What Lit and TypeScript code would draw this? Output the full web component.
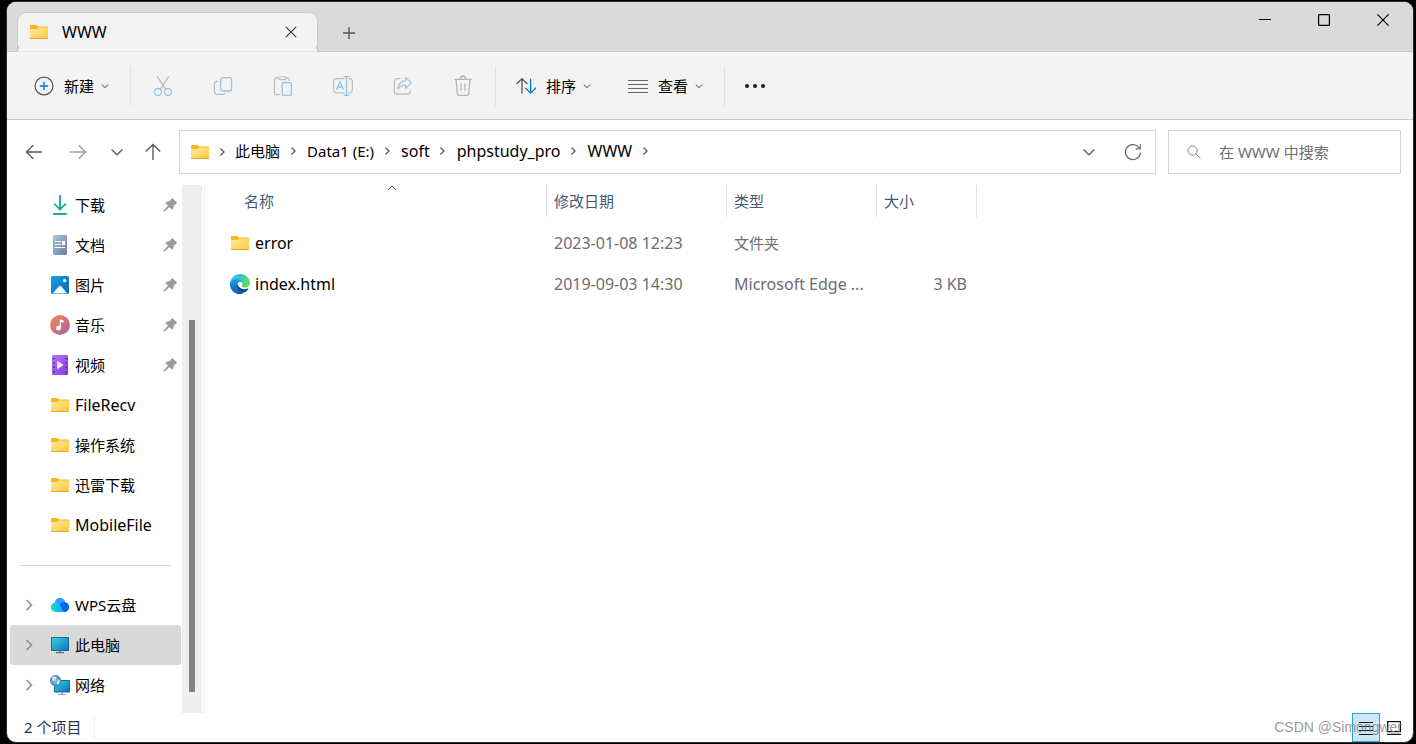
import { LitElement, html, css, svg, TemplateResult } from "lit";
import { customElement, property } from "lit/decorators.js";

const ICONS: Record<string, { w: number; h: number; body: TemplateResult }> = {
  folder: {
    w: 20, h: 20,
    body: svg`
      <defs><linearGradient id="f" x1="0" y1="0" x2="1" y2="1"><stop offset="0" stop-color="#ffe9a0"/><stop offset="1" stop-color="#ffc93c"/></linearGradient></defs>
      <path d="M1 3.8Q1 3 1.8 3H7Q7.6 3 8 3.5L9 4.6H18.4Q19 4.6 19 5.4V8H1Z" fill="#f8b71c"/>
      <path d="M1 7H7.2L9 5.6H19V16.2Q19 17 18.2 17H1.8Q1 17 1 16.2Z" fill="url(#f)"/>
      <path d="M1 16.1H19Q19 17 18.2 17H1.8Q1 17 1 16.1Z" fill="#e5a525"/>`,
  },
  close: { w: 12, h: 12, body: svg`<path d="M.8.8 11.2 11.2M11.2.8.8 11.2" stroke="#333" stroke-width="1.1"/>` },
  plus: { w: 12, h: 12, body: svg`<path d="M6 0V12M0 6H12" stroke="#555" stroke-width="1.4"/>` },
  minimize: { w: 12, h: 12, body: svg`<path d="M0 5.5H12" stroke="#000"/>` },
  maximize: { w: 12, h: 12, body: svg`<rect x=".6" y=".6" width="10.8" height="10.8" rx="1" stroke="#000" stroke-width="1.2"/>` },
  winclose: { w: 12, h: 12, body: svg`<path d="M.4.4 11.6 11.6M11.6.4.4 11.6" stroke="#000" stroke-width="1.2"/>` },
  create: { w: 20, h: 20, body: svg`<circle cx="10" cy="10" r="8.9" stroke="#555" stroke-width="1.2"/><path d="M10 5.8V14.2M5.8 10H14.2" stroke="#0078d4" stroke-width="1.4"/>` },
  down: { w: 10, h: 10, body: svg`<path d="M1.8 3.6 5 6.6 8.2 3.6" stroke="#777" stroke-width="1.1"/>` },
  cut: {
    w: 20, h: 22,
    body: svg`<path d="M4.3 1.4 12.9 14.6M15.7 1.4 7.1 14.6" stroke="#b9b9b9" stroke-width="1.2"/><circle cx="5" cy="17" r="3.5" stroke="#94c4ea" stroke-width="1.3"/><circle cx="15" cy="17" r="3.5" stroke="#94c4ea" stroke-width="1.3"/>`,
  },
  copy: {
    w: 20, h: 20,
    body: svg`<path d="M5 5.3H4A2.6 2.6 0 0 0 1.4 7.9V15.6A2.8 2.8 0 0 0 4.2 18.4H9.5Q11.3 18.4 12 16.8" stroke="#bcbcbc" stroke-width="1.2"/><rect x="7.6" y="1.6" width="11" height="13.4" rx="2.6" stroke="#94c4ea" stroke-width="1.3"/>`,
  },
  paste: {
    w: 20, h: 20,
    body: svg`<path d="M6 1.9H3.2A1.7 1.7 0 0 0 1.5 3.6V17A1.7 1.7 0 0 0 3.2 18.7H7M13 1.9H14.5A1.7 1.7 0 0 1 16.2 3.6V5" stroke="#bcbcbc" stroke-width="1.2"/><rect x="5.6" y=".8" width="7.6" height="2.8" rx="1.4" stroke="#bcbcbc" stroke-width="1.1"/><rect x="9.2" y="6.7" width="9.2" height="12.6" rx="1.6" stroke="#94c4ea" stroke-width="1.3"/>`,
  },
  rename: {
    w: 22, h: 20,
    body: svg`<path d="M12.6 2.7H4.5A3 3 0 0 0 1.5 5.7V13.8A3 3 0 0 0 4.5 16.8H12.6M16.6 2.7H17.4A3 3 0 0 1 20.4 5.7V13.8A3 3 0 0 1 17.4 16.8H16.6" stroke="#bcbcbc" stroke-width="1.2"/><path d="M4.6 13.8 8 5.6 11.4 13.8M5.8 11H10.2M14.5.7V19.3M11.6.7H17.4M11.6 19.3H17.4" stroke="#94c4ea" stroke-width="1.3"/>`,
  },
  share: {
    w: 20, h: 20,
    body: svg`<path d="M7.5 2.6H4A2.6 2.6 0 0 0 1.4 5.2V15.6A2.6 2.6 0 0 0 4 18.2H14.4A2.6 2.6 0 0 0 17 15.6V14.6" stroke="#bcbcbc" stroke-width="1.2"/><path d="M12.6 1.6 18.6 6.9 12.6 12.2V9.2Q8 8.8 5 12.8Q5.6 5.3 12.6 4.7Z" stroke="#94c4ea" stroke-width="1.2" stroke-linejoin="round"/>`,
  },
  trash: {
    w: 20, h: 22,
    body: svg`<path d="M1.4 4.4H18.6M7.4 4.2V3.6A2.6 2.6 0 0 1 12.6 3.6V4.2M3 4.6 4.4 18.6A2 2 0 0 0 6.4 20.4H13.6A2 2 0 0 0 15.6 18.6L17 4.6M8.1 8.6V15.6M11.9 8.6V15.6" stroke="#b4b4b4" stroke-width="1.3"/>`,
  },
  sort: {
    w: 20, h: 20,
    body: svg`<path d="M6 17.5V2.8M.6 8 6 2.6 11.4 8" stroke="#555" stroke-width="1.3"/><path d="M14.6 2.5V17M9.2 11.8 14.6 17.2 20 11.8" stroke="#0078d4" stroke-width="1.3"/>`,
  },
  view: { w: 20, h: 20, body: svg`<path d="M0 4.5H20M0 8.5H20M0 12.5H20M0 16.5H20" stroke="#666" stroke-width="1.1"/>` },
  more: { w: 22, h: 6, body: svg`<circle cx="3" cy="3" r="2" fill="#1a1a1a"/><circle cx="11" cy="3" r="2" fill="#1a1a1a"/><circle cx="19" cy="3" r="2" fill="#1a1a1a"/>` },
  back: { w: 18, h: 18, body: svg`<path d="M17 9H1.6M8.2 2.2 1.4 9 8.2 15.8" stroke="#5c5c5c" stroke-width="1.4"/>` },
  forward: { w: 18, h: 18, body: svg`<path d="M1 9H16.4M9.8 2.2 16.6 9 9.8 15.8" stroke="#a2a2a2" stroke-width="1.4"/>` },
  recent: { w: 14, h: 14, body: svg`<path d="M1.6 4.4 7 9.8 12.4 4.4" stroke="#606060" stroke-width="1.4"/>` },
  up: { w: 18, h: 18, body: svg`<path d="M9 17V1.6M1.8 8.6 9 1.4 16.2 8.6" stroke="#5c5c5c" stroke-width="1.4"/>` },
  crumb: { w: 10, h: 10, body: svg`<path d="M2.4 1.4 6 5 2.4 8.6" stroke="#666" stroke-width="1.4"/>` },
  refresh: { w: 18, h: 18, body: svg`<path d="M16.4 9.6A7.5 7.5 0 1 1 14.6 4.2L16 5.6M16.2 1.2V5.8H11.6" stroke="#6c6c6c" stroke-width="1.2"/>` },
  search: { w: 14, h: 14, body: svg`<circle cx="5.6" cy="5.6" r="4.6" stroke="#888"/><path d="M9 9 13.4 13.4" stroke="#888"/>` },
  expand: { w: 12, h: 12, body: svg`<path d="M3.6 1 8.6 6 3.6 11" stroke="#8a8a8a" stroke-width="1.5"/>` },
  pin: {
    w: 14, h: 14,
    body: svg`<path d="M8.6.8Q9.3.2 10 .9L13.2 4.1Q13.9 4.8 13.1 5.4L10.6 7.3Q10.6 9.8 9.2 11.4L6.4 8.9 1.2 13.6.6 13 5.2 7.7 2.6 4.8Q4.4 3.5 6.8 3.5Z" fill="#949ea6" stroke="#949ea6" stroke-width=".6"/>`,
  },
  sortup: { w: 10, h: 6, body: svg`<path d="M.8 5.2 5 1 9.2 5.2" stroke="#666"/>` },
  downloads: {
    w: 20, h: 20,
    body: svg`<defs><linearGradient id="d" x1="0" y1="0" x2="1" y2="1"><stop offset="0" stop-color="#3cc18e"/><stop offset="1" stop-color="#0c9f9b"/></linearGradient></defs><path d="M9 0H11V12.2L15.2 8 16.5 9.3 10 15.8 3.5 9.3 4.8 8 9 12.2Z" fill="url(#d)"/><rect x="3" y="18" width="14" height="2" rx=".6" fill="#1fae93"/>`,
  },
  documents: {
    w: 20, h: 20,
    body: svg`<defs><linearGradient id="o" x1="0" y1="0" x2="1" y2="1"><stop offset="0" stop-color="#b4c6da"/><stop offset="1" stop-color="#627d9f"/></linearGradient></defs><rect x="3" y="0" width="14" height="20" rx="1.4" fill="url(#o)"/><path d="M5 6.5H11M5 9.5H11M5 12.5H15" stroke="#fff"/><rect x="12" y="6" width="3" height="4" fill="#fff"/>`,
  },
  pictures: {
    w: 20, h: 20,
    body: svg`<defs><linearGradient id="p" x1="0" y1="0" x2="1" y2="1"><stop offset="0" stop-color="#1d9fe6"/><stop offset="1" stop-color="#0467b9"/></linearGradient></defs><rect x="1" y="1" width="18" height="18" rx="1.6" fill="url(#p)"/><path d="M2.6 18.4 9 11.2Q10 10.2 11 11.2L17.4 18.4Z" fill="#f2f8fd"/><circle cx="14.6" cy="5.6" r="1.7" fill="#fff"/>`,
  },
  music: {
    w: 20, h: 20,
    body: svg`<defs><linearGradient id="m" x1="0" y1="0" x2="1" y2="1"><stop offset="0" stop-color="#f58a4e"/><stop offset="1" stop-color="#a95fa9"/></linearGradient></defs><circle cx="10" cy="10" r="10" fill="url(#m)"/><path d="M9.8 4.2 13.6 5.4V7.6L11 6.9V13A2.4 2.4 0 1 1 9.8 10.9Z" fill="#fff"/>`,
  },
  videos: {
    w: 20, h: 20,
    body: svg`<defs><linearGradient id="v" x1="0" y1="0" x2="1" y2="1"><stop offset="0" stop-color="#b478f5"/><stop offset="1" stop-color="#8438e0"/></linearGradient></defs><rect x="2" y="0" width="16" height="20" rx="1.2" fill="url(#v)"/><path d="M3.8 3V19M16.2 3V19" stroke="#4a1f87" stroke-width="1.4" stroke-dasharray="1.5 2.8"/><path d="M7.2 5.8V14.2L13.6 10Z" fill="#f1e8fb"/>`,
  },
  cloud: {
    w: 20, h: 20,
    body: svg`<defs><linearGradient id="c" x1="0" y1="0" x2="1" y2="0"><stop offset="0" stop-color="#22e0d0"/><stop offset="1" stop-color="#119cff"/></linearGradient></defs><circle cx="10" cy="8" r="5.2" fill="#2aa0fb"/><path d="M9.6 10A5.3 5.3 0 0 1 14.4 7A5 5 0 0 1 14 17H5Z" fill="#0c62f2"/><path d="M5.4 7.6Q8.6 7.6 10 10.2L14 17H5.4A4.7 4.7 0 0 1 5.4 7.6Z" fill="url(#c)"/>`,
  },
  pc: {
    w: 20, h: 20,
    body: svg`<defs><linearGradient id="s" x1="0" y1="0" x2="1" y2="1"><stop offset="0" stop-color="#33d3e2"/><stop offset="1" stop-color="#1272bb"/></linearGradient></defs><rect x="1" y="2" width="18" height="14" rx=".8" fill="#11618f"/><rect x="1.8" y="2.8" width="16.4" height="12.4" fill="url(#s)"/><path d="M9 16H11V17H9Z" fill="#8b959d"/><path d="M6 17H14V18.2H6Z" fill="#59646d"/>`,
  },
  network: {
    w: 20, h: 20,
    body: svg`<defs><linearGradient id="n" x1="0" y1="0" x2="1" y2="1"><stop offset="0" stop-color="#33cfe0"/><stop offset="1" stop-color="#1272bb"/></linearGradient><radialGradient id="g"><stop offset="0" stop-color="#8cc7ea"/><stop offset="1" stop-color="#4a85a9"/></radialGradient></defs><rect x="4" y="5" width="16" height="12.4" rx=".8" fill="#11618f"/><rect x="4.8" y="5.8" width="14.4" height="10.8" fill="url(#n)"/><path d="M11 17.4H13V19H16V20H8V19H11Z" fill="#9aa5ad"/><circle cx="5.6" cy="5.6" r="5.6" fill="url(#g)"/><path d="M2 2.6Q5 .6 6.4 2.4L5.2 5 2.6 6.2ZM7.6 5.8 10.2 5 9 9 6.6 9.4Z" fill="#d7eef9"/>`,
  },
  edge: {
    w: 20, h: 20,
    body: svg`<defs><linearGradient id="ea" x1="0" y1="0" x2="1" y2=".4"><stop offset="0" stop-color="#2fb4f0"/><stop offset=".5" stop-color="#35c3d0"/><stop offset="1" stop-color="#63de52"/></linearGradient><linearGradient id="eb" x1="0" y1="0" x2="0" y2="1"><stop offset="0" stop-color="#1b9de2"/><stop offset="1" stop-color="#0a5fb8"/></linearGradient></defs>
    <path d="M0 9.4C.6 4 4.8 0 10 0C15.8 0 20 4.3 20 8.7C20 11.7 17.6 13.6 14.9 13.6C12.6 13.6 11.5 12.8 11.9 12C12.9 10.2 12.8 6 8 5.2C4.2 4.8 1.2 6.6 0 9.4Z" fill="url(#ea)"/>
    <path d="M0 10.2C.1 7.2 3 5 6.8 5C10.4 5 12.6 7.4 12.6 9.7C12.5 9 11.4 7.6 9.6 7.8C7.4 8.2 6.4 11.2 7.6 14C8.7 16.6 11.4 18.6 14.4 18.5C13 19.5 11.6 20 10 20C4.4 20-.2 15.6 0 10.2Z" fill="url(#eb)"/>
    <path d="M7.4 9.8C6 13 7.8 17.4 11.8 18.4C14.6 19 17.2 17.2 18.4 15C18.7 14.4 18.3 14.1 17.8 14.4C15.4 15.6 12 15.6 9.8 13.6C8.6 12.6 7.6 11.2 7.4 9.8Z" fill="#104a8e"/>`,
  },
  details: { w: 14, h: 14, body: svg`<path d="M0 1.5H14M0 5.5H14M0 9.5H14M0 13.5H14" stroke="#111"/>` },
  tiles: { w: 14, h: 14, body: svg`<rect x=".6" y=".6" width="12.8" height="10" stroke="#111" stroke-width="1.2"/><path d="M0 13.4H14" stroke="#111" stroke-width="1.2"/>` },
};

@customElement("ui-icon")
class UiIcon extends LitElement {
  @property() name = "";
  static styles = css`
    :host { display: inline-flex; flex: none; }
    svg { display: block; fill: none; }
  `;
  render() {
    const i = ICONS[this.name];
    return html`<svg width=${i.w} height=${i.h} viewBox="0 0 ${i.w} ${i.h}" aria-hidden="true">${i.body}</svg>`;
  }
}

const PINNED = [
  ["downloads", "下载"], ["documents", "文档"], ["pictures", "图片"], ["music", "音乐"], ["videos", "视频"],
];
const FOLDERS = ["FileRecv", "操作系统", "迅雷下载", "MobileFile"];
const ROOTS = [["cloud", "WPS云盘"], ["pc", "此电脑"], ["network", "网络"]];
const CRUMBS = ["此电脑", "Data1 (E:)", "soft", "phpstudy_pro", "WWW"];
const FILES = [
  { icon: "folder", name: "error", date: "2023-01-08 12:23", type: "文件夹", size: "" },
  { icon: "edge", name: "index.html", date: "2019-09-03 14:30", type: "Microsoft Edge ...", size: "3 KB" },
];
const EDITS = [
  ["cut", "剪切"], ["copy", "复制"], ["paste", "粘贴"], ["rename", "重命名"], ["share", "共享"], ["trash", "删除"],
];

@customElement("app-root")
class AppRoot extends LitElement {
  static styles = css`
    :host {
      display: flex; box-sizing: border-box; min-height: 100vh; padding: 1px 2px 1px 6px; background: #000;
      font: 15px/20px "Noto Sans", "Noto Sans CJK SC", sans-serif; color: #000;
    }
    * { box-sizing: border-box; }
    button, input { font: inherit; color: inherit; border: 0; padding: 0; margin: 0; background: none; }
    button { display: inline-flex; align-items: center; justify-content: center; white-space: nowrap; }
    a { color: inherit; text-decoration: none; }
    ul { list-style: none; margin: 0; padding: 0; }
    .window { flex: 1; min-width: 0; display: flex; flex-direction: column; background: #fff; border: 1px solid #2b2b2b; border-radius: 10px; overflow: hidden; }

    .titlebar { display: flex; align-items: flex-end; height: 50px; padding: 0 1px 0 10px; background: #dadada; border-bottom: 1px solid #cacaca; }
    .tab { position: relative; display: flex; align-items: center; width: 301px; height: 40px; margin-bottom: -1px; padding: 0 20px 0 11px; background: #f3f3f3; border: 1px solid #cacaca; border-bottom-color: #e9e9e9; border-radius: 9px 9px 0 0; }
    .tab::before, .tab::after { content: ""; position: absolute; bottom: -1px; width: 5px; height: 5px; border-bottom: 1px solid #cacaca; }
    .tab::before { left: -5px; border-right: 1px solid #cacaca; border-bottom-right-radius: 5px; }
    .tab::after { right: -5px; border-left: 1px solid #cacaca; border-bottom-left-radius: 5px; }
    .tab-name { flex: 1; padding-left: 13px; }
    .add { width: 61px; height: 36px; }
    .controls { display: flex; margin-left: auto; align-self: flex-start; }
    .controls button { width: 59px; height: 35px; }

    .toolbar { display: flex; align-items: center; height: 68px; padding-left: 9px; background: #f3f3f3; border-bottom: 1px solid #c8c8c8; }
    .command { gap: 10px; height: 40px; padding: 0 18px; }
    .command ui-icon + span + ui-icon { margin-left: -4px; }
    .tool { width: 60px; height: 40px; }
    .more { width: 56px; height: 40px; }
    .rule { width: 1px; height: 40px; margin: 0 2px; background: #e1e1e1; }

    .location { display: flex; align-items: center; padding: 10px 12px 11px 5px; }
    .step { width: 44px; height: 40px; }
    .step.narrow { width: 34px; }
    .step.wide { width: 38px; }
    .address, .search { display: flex; align-items: center; height: 44px; border: 1px solid #d4d4d4; }
    .address { flex: 1; min-width: 0; margin: 0 12px 0 7px; padding-left: 10px; }
    .crumbs { display: flex; flex: 1; padding-bottom: 2px; }
    .crumbs li { display: flex; align-items: center; }
    .arrow { display: flex; justify-content: center; width: 27px; }
    .arrow.first { width: 25px; }
    .search { width: 233px; padding: 0 18px; gap: 18px; }
    .search input { flex: 1; min-width: 0; outline: 0; }
    .search input::placeholder { color: #6d6d6d; opacity: 1; }

    .body { flex: 1; display: flex; min-height: 0; }
    .nav { display: flex; width: 198px; border-right: 1px solid #f3f3f3; }
    .tree { width: 171px; margin: 0 1px 0 3px; }
    .node { display: flex; align-items: center; height: 40px; padding-right: 4px; border-radius: 3px; }
    .node.selected { background: #d9d9d9; }
    .twist { width: 40px; padding-left: 13px; display: flex; }
    .label { flex: 1; padding-left: 5px; white-space: nowrap; }
    .split { height: 40px; padding: 20px 10px 0; }
    .line { height: 1px; background: #d4d4d4; }
    .track { display: flex; width: 20px; padding: 135px 7px 21px; background: #efefef; }
    .thumb { flex: 1; background: #858585; }

    .files { flex: 1; min-width: 0; }
    table { border-collapse: separate; border-spacing: 0; table-layout: fixed; width: 772px; }
    .c-name { width: 342px; } .c-date { width: 180px; } .c-type { width: 150px; } .c-size { width: 100px; }
    th { height: 32px; padding: 0; font-weight: 400; text-align: left; border-right: 1px solid #e2e2e2; color: #44597a; }
    th button { position: relative; width: 100%; height: 32px; padding-left: 7px; justify-content: flex-start; }
    .c-name button { width: 309px; margin-left: 32px; }
    .sorted { position: absolute; top: 0; left: 0; right: 0; display: flex; justify-content: center; }
    td { height: 41px; padding: 0 0 0 7px; color: #6d6d6d; white-space: nowrap; }
    tbody::before { content: ""; display: table-row; height: 5px; }
    td.name { padding-left: 25px; color: #000; }
    .file { display: flex; align-items: center; gap: 5px; }
    td.size { text-align: right; padding-right: 10px; }
    .latin { font-size: 16px; }

    .status { display: flex; align-items: center; height: 29px; padding: 0 5px 0 17px; color: #1f3557; }
    .count { padding: 0 13px 2px 0; border-right: 1px solid #f0f0f0; }
    .modes { position: relative; display: flex; align-items: center; margin-left: auto; }
    .mode { width: 28px; height: 29px; }
    .mode.on { background: #cce8f8; border: 1px solid #2f9fd8; }
    .mark { position: absolute; right: 6px; top: 4px; white-space: nowrap; font: 14px/20px "Liberation Sans", sans-serif; color: #7f7f7fcc; }
  `;

  private text(value: string) {
    return html`<span class=${/^[\x20-\x7e]+$/.test(value) ? "latin" : ""}>${value}</span>`;
  }

  private node(icon: string, name: string, kind: "pinned" | "plain" | "root", selected = false) {
    return html`<li><a href="#" class="node ${selected ? "selected" : ""}">
      <span class="twist">${kind === "root" ? html`<ui-icon name="expand"></ui-icon>` : ""}</span>
      <ui-icon name=${icon}></ui-icon><span class="label">${this.text(name)}</span>
      ${kind === "pinned" ? html`<ui-icon name="pin"></ui-icon>` : ""}
    </a></li>`;
  }

  render() {
    return html`<div class="window">
      <header class="titlebar">
        <div class="tab"><ui-icon name="folder"></ui-icon><span class="tab-name latin">WWW</span>
          <button aria-label="关闭标签页"><ui-icon name="close"></ui-icon></button></div>
        <button class="add" aria-label="新标签页"><ui-icon name="plus"></ui-icon></button>
        <div class="controls">
          <button aria-label="最小化"><ui-icon name="minimize"></ui-icon></button>
          <button aria-label="最大化"><ui-icon name="maximize"></ui-icon></button>
          <button aria-label="关闭"><ui-icon name="winclose"></ui-icon></button>
        </div>
      </header>
      <div class="toolbar" role="toolbar">
        <button class="command"><ui-icon name="create"></ui-icon><span>新建</span><ui-icon name="down"></ui-icon></button>
        <span class="rule"></span>
        ${EDITS.map(([icon, label]) => html`<button class="tool" disabled aria-label=${label}><ui-icon name=${icon}></ui-icon></button>`)}
        <span class="rule"></span>
        <button class="command"><ui-icon name="sort"></ui-icon><span>排序</span><ui-icon name="down"></ui-icon></button>
        <button class="command"><ui-icon name="view"></ui-icon><span>查看</span><ui-icon name="down"></ui-icon></button>
        <span class="rule"></span>
        <button class="more" aria-label="更多"><ui-icon name="more"></ui-icon></button>
      </div>
      <div class="location">
        <button class="step" aria-label="后退"><ui-icon name="back"></ui-icon></button>
        <button class="step" aria-label="前进"><ui-icon name="forward"></ui-icon></button>
        <button class="step narrow" aria-label="最近"><ui-icon name="recent"></ui-icon></button>
        <button class="step wide" aria-label="向上"><ui-icon name="up"></ui-icon></button>
        <div class="address">
          <ui-icon name="folder"></ui-icon><span class="arrow first"><ui-icon name="crumb"></ui-icon></span>
          <ul class="crumbs">${CRUMBS.map((c) => html`<li><a href="#" class=${/^\w+$/.test(c) ? "latin" : ""}>${c}</a><span class="arrow"><ui-icon name="crumb"></ui-icon></span></li>`)}</ul>
          <button class="step" aria-label="历史"><ui-icon name="recent"></ui-icon></button>
          <button class="step" aria-label="刷新"><ui-icon name="refresh"></ui-icon></button>
        </div>
        <label class="search"><ui-icon name="search"></ui-icon><input type="text" aria-label="搜索" placeholder="在 WWW 中搜索"></label>
      </div>
      <div class="body">
        <nav class="nav">
          <ul class="tree">
            ${PINNED.map(([icon, name]) => this.node(icon, name, "pinned"))}
            ${FOLDERS.map((name) => this.node("folder", name, "plain"))}
            <li class="split"><div class="line"></div></li>
            ${ROOTS.map(([icon, name]) => this.node(icon, name, "root", icon === "pc"))}
          </ul>
          <div class="track"><div class="thumb"></div></div>
        </nav>
        <main class="files">
          <table>
            <thead><tr>
              <th class="c-name"><button>名称<span class="sorted"><ui-icon name="sortup"></ui-icon></span></button></th>
              <th class="c-date"><button>修改日期</button></th>
              <th class="c-type"><button>类型</button></th>
              <th class="c-size"><button>大小</button></th>
            </tr></thead>
            <tbody>${FILES.map((f) => html`<tr>
              <td class="name"><div class="file"><ui-icon name=${f.icon}></ui-icon>${this.text(f.name)}</div></td>
              <td>${this.text(f.date)}</td><td>${this.text(f.type)}</td><td class="size">${this.text(f.size)}</td>
            </tr>`)}</tbody>
          </table>
        </main>
      </div>
      <footer class="status">
        <span class="count">2 个项目</span>
        <div class="modes">
          <button class="mode on" aria-label="详细信息"><ui-icon name="details"></ui-icon></button>
          <button class="mode" aria-label="大缩略图"><ui-icon name="tiles"></ui-icon></button>
          <span class="mark">CSDN @Simongwer</span>
        </div>
      </footer>
    </div>`;
  }
}
